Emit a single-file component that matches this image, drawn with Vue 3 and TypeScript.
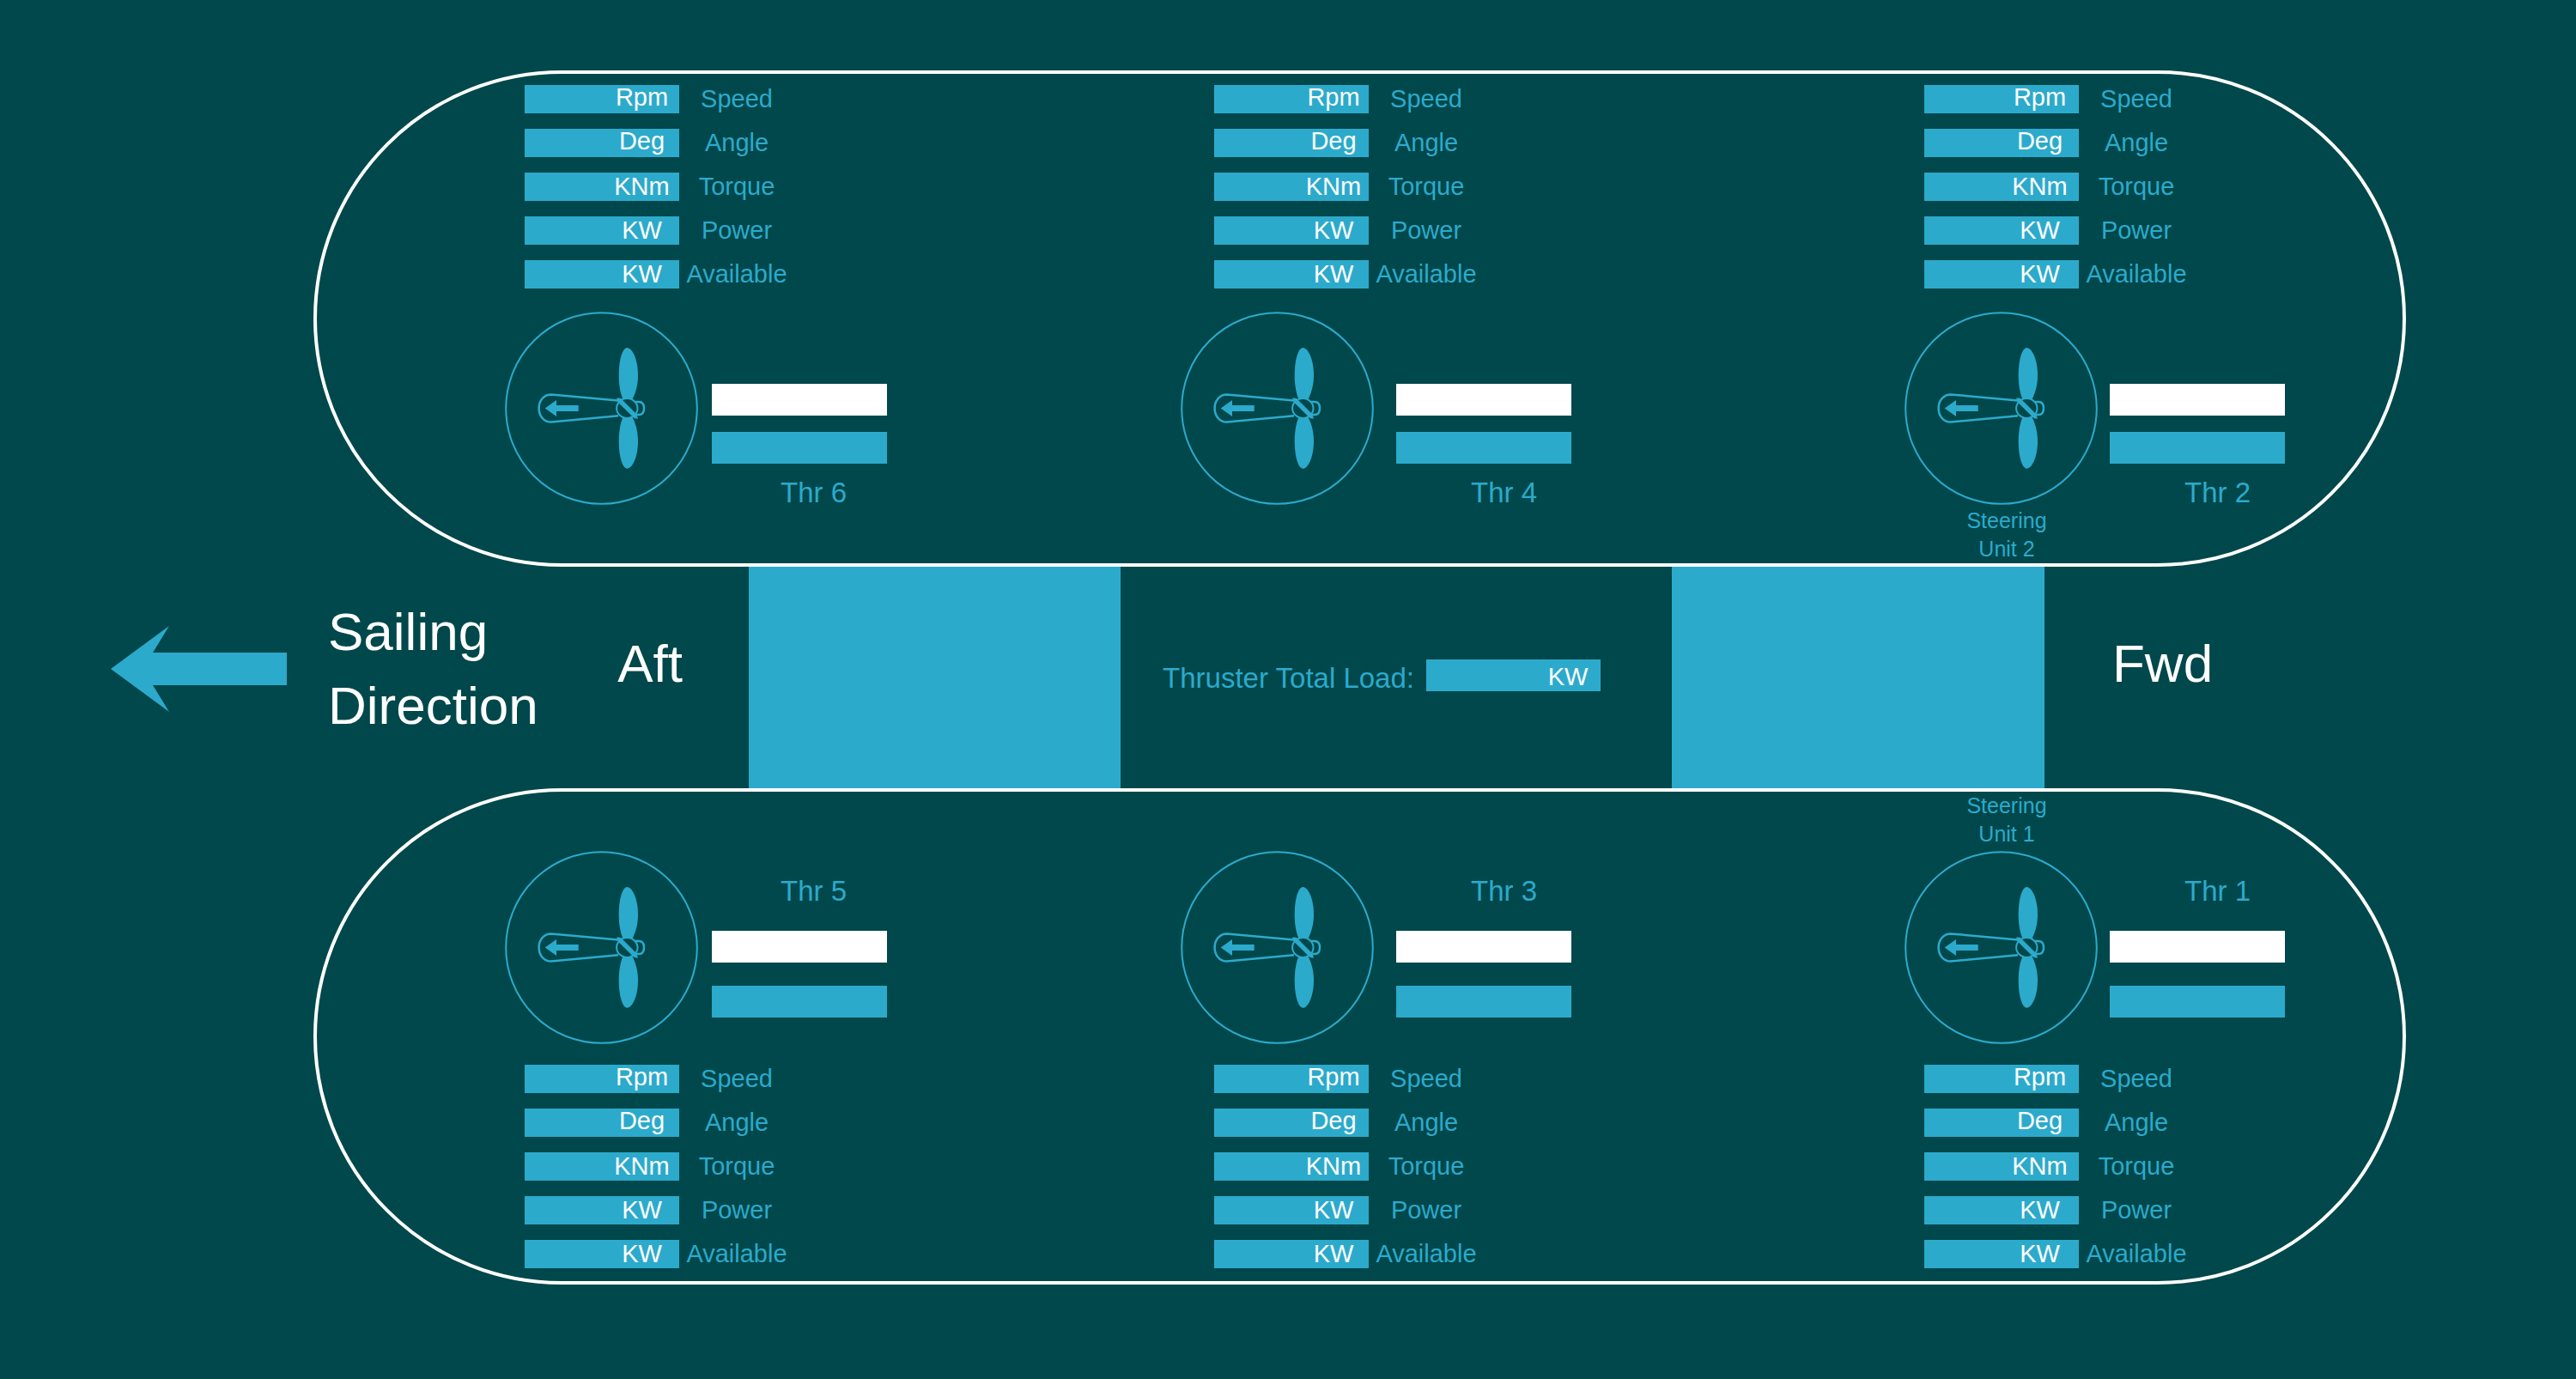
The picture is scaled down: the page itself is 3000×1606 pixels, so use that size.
<script setup lang="ts">
interface Thruster {
  id: number
  column: 'aft' | 'mid' | 'fwd'
  steeringUnit?: number
}

interface Reading {
  unit: string
  label: string
  descends?: boolean
}

const hulls: { side: 'upper' | 'lower'; thrusters: Thruster[] }[] = [
  {
    side: 'upper',
    thrusters: [
      { id: 6, column: 'aft' },
      { id: 4, column: 'mid' },
      { id: 2, column: 'fwd', steeringUnit: 2 },
    ],
  },
  {
    side: 'lower',
    thrusters: [
      { id: 5, column: 'aft' },
      { id: 3, column: 'mid' },
      { id: 1, column: 'fwd', steeringUnit: 1 },
    ],
  },
]

const readings: Reading[] = [
  { unit: 'Rpm', label: 'Speed', descends: true },
  { unit: 'Deg', label: 'Angle', descends: true },
  { unit: 'KNm', label: 'Torque' },
  { unit: 'KW', label: 'Power' },
  { unit: 'KW', label: 'Available' },
]

const blade =
  'M142.3 42 C148.5 42 155 56 155 74 C155 85 152.5 94 148.5 102 H137.5 C134 94 132.7 84 132.7 74 C132.7 56 137 42 142.3 42 Z'
</script>

<template>
  <main class="vessel">
    <section v-for="hull in hulls" :key="hull.side" class="hull" :class="hull.side">
      <article v-for="t in hull.thrusters" :key="t.id" class="thruster" :class="t.column">
        <dl class="readings">
          <div v-for="r in readings" :key="r.label" class="reading">
            <dt class="label">{{ r.label }}</dt>
            <dd class="bar">
              <span class="unit" :class="{ descends: r.descends }">{{ r.unit }}</span>
            </dd>
          </div>
        </dl>
        <div class="drive">
          <svg class="dial" viewBox="0 0 225 225" aria-hidden="true">
            <circle class="outline" cx="112.5" cy="112.5" r="111.3" />
            <g class="outline housing">
              <path d="M132 103.4 L54 96.4 C45 96.4 39.6 104 39.6 112.5 C39.6 121 45 128.6 54 128.6 L132 121.2" />
              <path d="M152 104.9 H156 C160 104.9 162 108 162 112.5 C162 117 160 120.1 156 120.1 H152" />
            </g>
            <path class="solid" d="M46.7 112.5 L60 103 V109 H85.7 V116 H60 V122 Z" />
            <path class="solid" :d="blade" />
            <path class="solid" transform="matrix(1 0 0 -1 0 224.8)" :d="blade" />
            <ellipse class="hub" cx="142.3" cy="112.5" rx="12.2" ry="11.4" />
            <path class="solid" d="M130.3 100.2 L135 101 L153.5 119.5 L155 124.8 L150.5 124 L131 104.8 Z" />
          </svg>
          <div class="panel">
            <div class="level setpoint"></div>
            <div class="level"></div>
            <h2 class="name">Thr {{ t.id }}</h2>
          </div>
        </div>
        <p class="steering">
          <template v-if="t.steeringUnit">Steering<br />Unit {{ t.steeringUnit }}</template>
        </p>
      </article>
    </section>

    <section class="deck">
      <div class="zone">
        <svg class="heading" viewBox="0 0 205 100" aria-hidden="true">
          <path class="solid" d="M0 50 L68 0 L49 31 H205 V69 H49 L68 100 Z" />
        </svg>
        <p class="big">Sailing<br />Direction</p>
        <p class="big end aft-end">Aft</p>
      </div>
      <div class="pontoon"></div>
      <div class="load">
        <span class="load-label">Thruster Total Load:</span>
        <div class="bar total"><span class="unit">KW</span></div>
      </div>
      <div class="pontoon"></div>
      <div class="zone">
        <p class="big end fwd-end">Fwd</p>
      </div>
    </section>
  </main>
</template>

<style>
body {
  margin: 0;
  background: #00484b;
}
</style>

<style scoped>
.vessel {
  --sea: #00484b;
  --cyan: #2caacc;
  display: flex;
  flex-direction: column;
  box-sizing: border-box;
  min-height: 100vh;
  padding: 82px 0 110px;
  background: var(--sea);
  color: var(--cyan);
  font-family: "Liberation Sans", Arial, sans-serif;
  font-size: 29px;
  line-height: 33px;
}

h2,
p,
dl,
dd {
  margin: 0;
  font-weight: normal;
}

.hull {
  display: grid;
  grid-template-columns: 787fr 843fr 580fr;
  margin: 0 198px 0 365px;
  padding-left: 219px;
  border: 4px solid #fff;
  border-radius: 289px;
}

.hull.upper {
  order: 1;
  padding-top: 13px;
}

.deck {
  order: 2;
}

.hull.lower {
  order: 3;
  padding-bottom: 15px;
}

.thruster {
  display: flex;
  flex-direction: column;
}

.lower .thruster {
  flex-direction: column-reverse;
}

.aft {
  --readings-indent: 23px;
  --unit-width: 87px;
  --panel-gap: 16px;
  --name-indent: 80px;
}

.mid {
  --readings-indent: 39px;
  --unit-width: 82px;
  --panel-gap: 26px;
  --name-indent: 87px;
}

.fwd {
  --readings-indent: 23px;
  --unit-width: 91px;
  --panel-gap: 14px;
  --name-indent: 87px;
}

.readings {
  display: flex;
  flex-direction: column;
  gap: 18px;
  margin-left: var(--readings-indent);
}

.reading {
  display: flex;
  flex-direction: row-reverse;
  justify-content: flex-end;
}

.label {
  width: 134px;
  text-align: center;
}

.bar {
  display: flex;
  justify-content: flex-end;
  width: 180px;
  height: 33px;
  background: var(--cyan);
  color: #fff;
}

.unit {
  width: var(--unit-width);
  text-align: center;
}

.unit.descends {
  line-height: 28px;
}

.drive {
  display: flex;
  gap: var(--panel-gap);
}

.upper .drive {
  margin: 27px 0 2px;
}

.lower .drive {
  margin: 3px 0 24px;
}

.dial {
  flex: none;
  width: 225px;
  height: 225px;
}

.outline {
  fill: none;
  stroke: var(--cyan);
  stroke-width: 2;
}

.housing {
  stroke-width: 2.5;
}

.solid {
  fill: var(--cyan);
}

.hub {
  fill: var(--sea);
  stroke: var(--cyan);
  stroke-width: 2;
}

.panel {
  display: flex;
  flex-direction: column;
  gap: 19px;
  width: 204px;
  padding-top: 84px;
}

.lower .panel {
  gap: 27px;
  padding-top: 32px;
}

.level {
  height: 37px;
  background: var(--cyan);
}

.level.setpoint {
  background: #fff;
}

.name {
  margin-left: var(--name-indent);
  font-size: 33px;
  line-height: 29px;
}

.lower .name {
  order: -1;
  margin-bottom: 5px;
}

.steering {
  width: 238px;
  height: 66px;
  font-size: 25px;
  text-align: center;
}

.deck {
  display: grid;
  grid-template-columns: 872fr 433fr 642fr 434fr 619fr;
  min-height: 258px;
}

.pontoon {
  background: var(--cyan);
}

.zone {
  display: flex;
  align-items: center;
  padding-bottom: 20px;
}

.heading {
  flex: none;
  width: 205px;
  height: 100px;
  margin: 0 48px 0 129px;
}

.big {
  color: #fff;
  font-size: 62px;
  line-height: 86px;
}

.end {
  padding-bottom: 12px;
}

.aft-end {
  margin: 0 77px 0 auto;
}

.fwd-end {
  margin-left: 79px;
}

.load {
  display: flex;
  align-items: center;
  justify-content: flex-end;
  gap: 14px;
  padding: 0 83px 6px 0;
}

.load-label {
  padding-top: 6px;
  font-size: 33px;
  line-height: 37px;
  white-space: nowrap;
}

.bar.total {
  --unit-width: 76px;
  width: 203px;
  height: 37px;
  line-height: 40px;
}
</style>
